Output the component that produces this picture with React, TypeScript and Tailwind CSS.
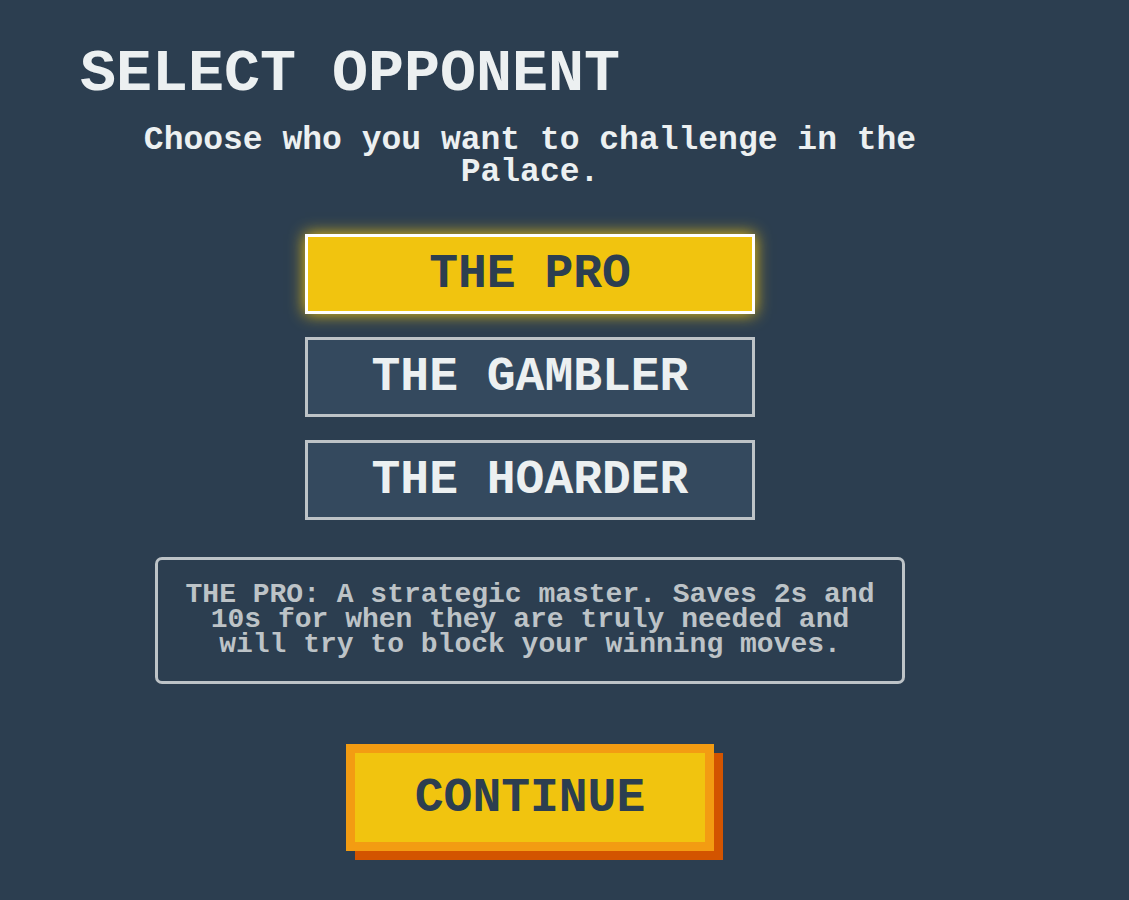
import { useState } from "react";

const opponents = [
  {
    name: "THE PRO",
    description:
      "A strategic master. Saves 2s and 10s for when they are truly needed and will try to block your winning moves.",
  },
  {
    name: "THE GAMBLER",
    description: "Plays fast and loose, and will gladly risk it all on one card.",
  },
  {
    name: "THE HOARDER",
    description: "Holds on to the best cards until the very end of the game.",
  },
];

export default function App() {
  const [selected, setSelected] = useState(0);
  const opponent = opponents[selected];

  return (
    <div className="min-h-screen bg-[#2c3e50] px-20 pt-[42px] pb-9 font-['Liberation_Mono','DejaVu_Sans_Mono',monospace] font-bold text-[#ecf0f1]">
      <main className="flex max-w-[900px] flex-col items-center">
        <h1 className="self-start text-[60px] leading-[64px]">SELECT OPPONENT</h1>
        <p className="mt-[19px] text-center text-[33px] leading-8">
          Choose who you want to challenge in the Palace.
        </p>
        <div className="mt-[45px] flex w-full max-w-[450px] flex-col gap-[23px]">
          {opponents.map((item, index) => (
            <button
              key={item.name}
              type="button"
              aria-pressed={index === selected}
              onClick={() => setSelected(index)}
              className={
                index === selected
                  ? "h-20 border-3 border-white bg-[#f1c40f] text-[48px] leading-none text-[#2c3e50] shadow-[0_0_15px_#f1c40f]"
                  : "h-20 border-3 border-[#bdc3c7] bg-[#34495e] text-[48px] leading-none text-[#ecf0f1]"
              }
            >
              {item.name}
            </button>
          ))}
        </div>
        <p className="mt-[37px] min-h-[127px] w-full max-w-[750px] rounded-[7px] border-3 border-[#bdc3c7] p-[22px] text-center text-[28px] leading-[25px] text-[#bdc3c7]">
          {`${opponent.name}: ${opponent.description}`}
        </p>
        <button
          type="button"
          className="mt-[60px] border-9 border-[#f39c12] bg-[#f1c40f] px-[60px] pt-[21px] pb-5 text-[48px] leading-[48px] text-[#2c3e50] shadow-[9px_9px_0_#d35400]"
        >
          CONTINUE
        </button>
      </main>
    </div>
  );
}
